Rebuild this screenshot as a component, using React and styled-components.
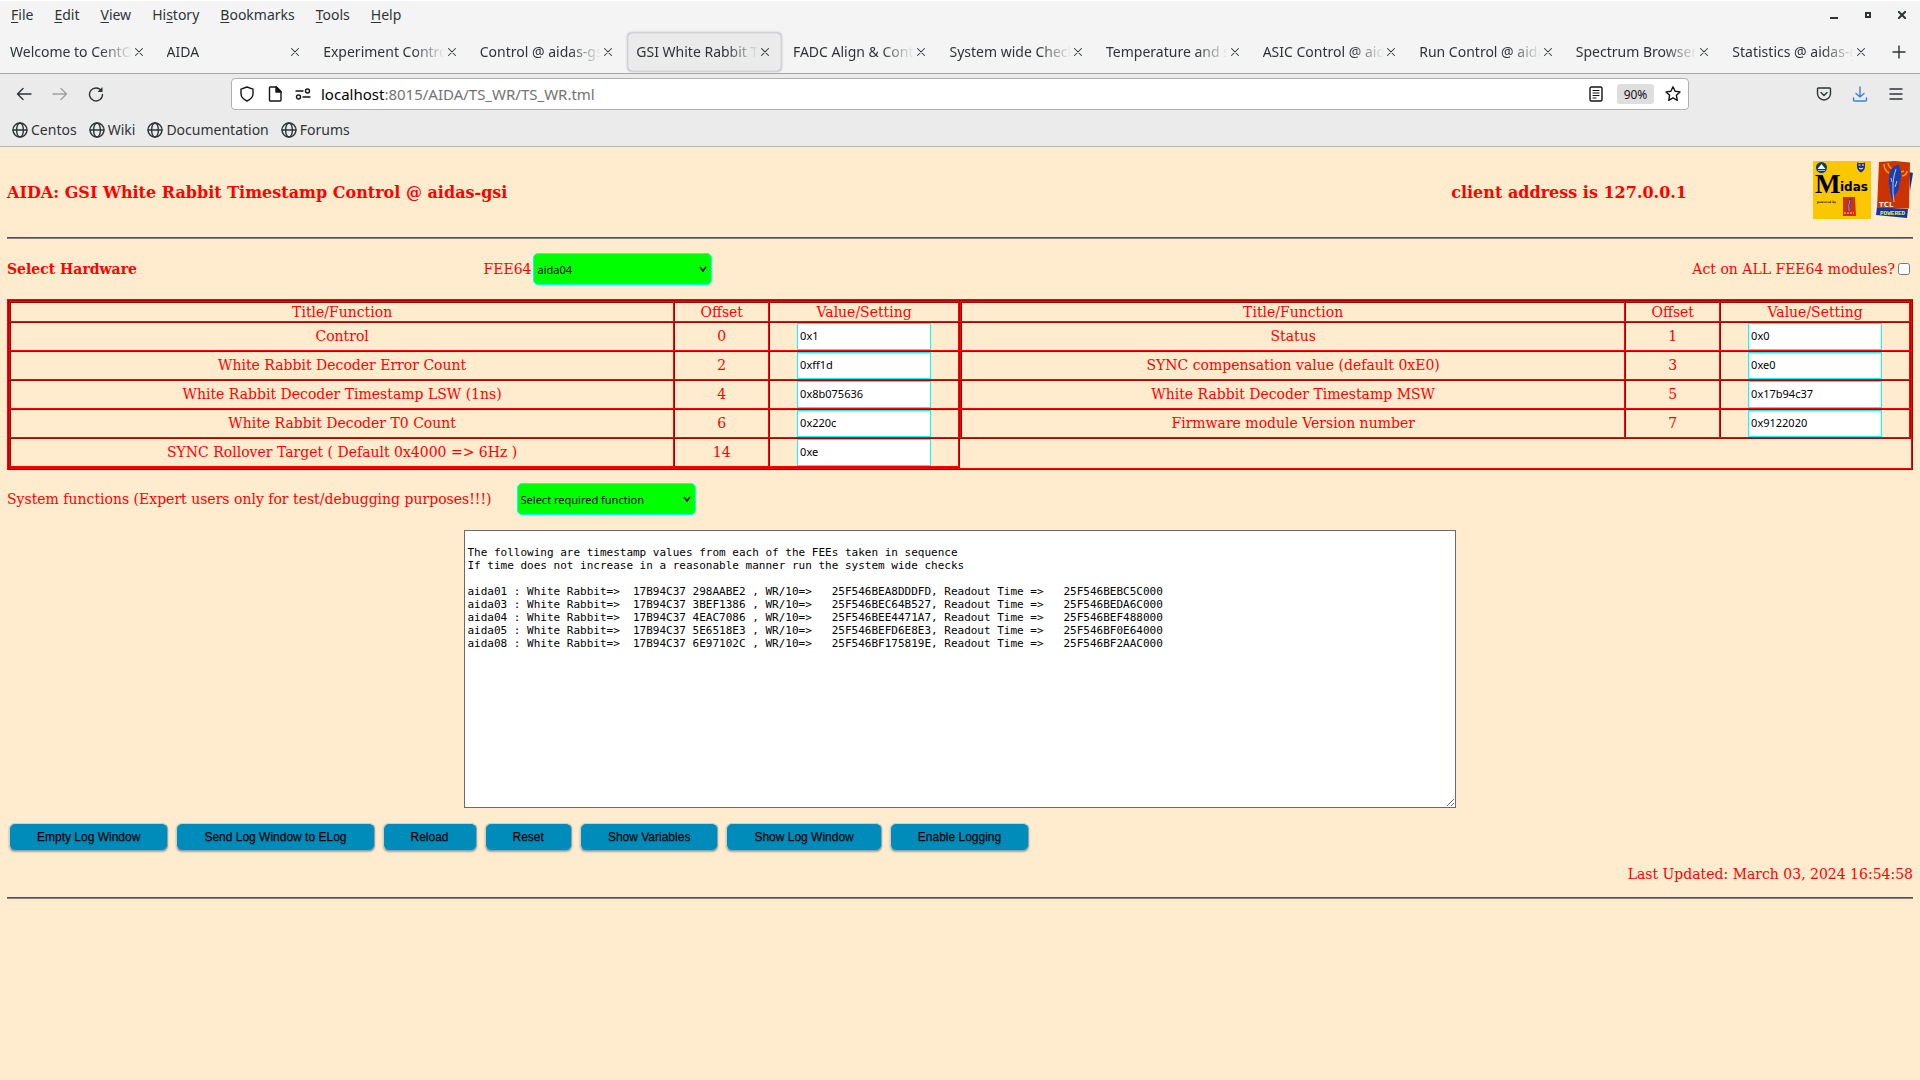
import React, { useState } from 'react';
import styled, { createGlobalStyle, css } from 'styled-components';

const GlobalStyle = createGlobalStyle`
  * {
    box-sizing: border-box;
  }
  body {
    margin: 0;
    background: #ffebcd;
    color: #ff0000;
    font-family: 'DejaVu Serif', serif;
    font-size: 14px;
    line-height: 18px;
  }
`;

/* ---------- browser chrome ---------- */

const Chrome = styled.header`
  background: #ebebeb;
  border-top: 1px solid #ffffff;
  border-bottom: 1px solid #b4b4b4;
  color: #2e3436;
  font-family: 'Noto Sans', sans-serif;
  font-size: 14px;
  line-height: 20px;
`;

const TopRow = styled.div`
  display: flex;
  align-items: center;
  justify-content: space-between;
  height: 30px;
  padding: 0 10px 2px 1px;
  background: #f4f4f4;
`;

const MenuList = styled.nav`
  display: flex;
`;

const PlainButton = styled.button`
  display: flex;
  align-items: center;
  justify-content: center;
  padding: 0;
  border: none;
  background: none;
  color: inherit;
  font: inherit;
`;

const MenuButton = styled(PlainButton)`
  display: block;
  padding: 0 11px 0 10px;

  u {
    text-underline-offset: 2px;
  }
`;

const WindowButtons = styled.div`
  display: flex;
  gap: 18px;
`;

const WindowButton = styled(PlainButton)`
  width: 16px;
  height: 16px;
`;

const TabStrip = styled.div`
  display: flex;
  align-items: center;
  height: 43px;
  border-bottom: 1px solid #a6a6a6;
  background: #f4f4f4;
`;

const Tab = styled.div`
  display: flex;
  flex: 1;
  align-items: center;
  min-width: 0;
  height: 38px;
  margin: 0 2px;
  padding: 0 9px 0 8px;
  border-radius: 4px;
  ${({ $active }) =>
    $active &&
    css`
      background: #ebebeb;
      box-shadow: 0 0 3px #8f8f9d, inset 0 0 1px #8f8f9d;
    `}
`;

const TabTitle = styled.button`
  flex: 1;
  min-width: 0;
  padding: 0;
  overflow: hidden;
  border: none;
  background: none;
  color: inherit;
  font: inherit;
  text-align: left;
  white-space: nowrap;
  mask-image: linear-gradient(to left, transparent, black 32px);
`;

const TabClose = styled(PlainButton)`
  width: 14px;
  height: 18px;
`;

const NewTab = styled(PlainButton)`
  width: 41px;
  height: 38px;
`;

const NavBar = styled.div`
  display: grid;
  grid-template-columns: 231px 1fr 231px;
  align-items: center;
  height: 40px;
`;

const NavGroup = styled.div`
  display: flex;
  justify-content: ${({ $end }) => ($end ? 'flex-end' : 'flex-start')};
  gap: 12px;
  padding: 0 12px;
`;

const NavButton = styled(PlainButton)`
  width: 24px;
  height: 24px;
  opacity: ${({ disabled }) => (disabled ? 0.4 : 1)};
  color: ${({ $color }) => $color || 'inherit'};
`;

const AddressBar = styled.div`
  display: flex;
  align-items: center;
  height: 32px;
  padding: 0 7px 0 5px;
  border: 1px solid #b0b0b0;
  border-radius: 4px;
  background: #ffffff;
  color: #15141a;
`;

const BarIcon = styled(PlainButton)`
  width: 20px;
  height: 20px;
  margin-right: 8px;
`;

const Address = styled.div`
  flex: 1;
  font-size: 15px;
  color: #737373;

  span {
    color: #000000;
  }
`;

const ZoomBadge = styled.button`
  width: 37px;
  height: 20px;
  margin: 0 11px 0 3px;
  padding: 0;
  border: none;
  border-radius: 3px;
  background: #dedede;
  color: #15141a;
  font-family: inherit;
  font-size: 12px;
`;

const Bookmarks = styled.nav`
  display: flex;
  gap: 12px;
  height: 32px;
  padding: 6px 12px;

  a {
    display: flex;
    align-items: center;
    gap: 3px;
    height: 20px;
    color: inherit;
    text-decoration: none;
  }
`;

/* ---------- page ---------- */

const Page = styled.main`
  padding: 0 7px;
`;

const PageHeader = styled.div`
  display: flex;
  align-items: center;
  height: 90px;
  padding-top: 2px;
`;

const Title = styled.h1`
  flex: 1;
  margin: 0;
  font-size: 16px;
  line-height: 20px;
`;

const ClientAddress = styled.h2`
  margin: 0 126px 0 0;
  font-size: 16px;
  line-height: 20px;
`;

const Logos = styled.div`
  display: flex;
  align-items: center;
  gap: 5px;
  height: 58px;
  margin-bottom: 6px;
`;

const Rule = styled.hr`
  height: 2px;
  margin: 0;
  border: none;
  border-top: 1px solid #505050;
  border-bottom: 1px solid #7f8088;
`;

const HardwareRow = styled.div`
  display: grid;
  grid-template-columns: 25% 1fr auto;
  align-items: center;
  height: 60px;
`;

const Inline = styled.div`
  display: flex;
  align-items: center;
  gap: 2px;
`;

const SelectWrap = styled.div`
  position: relative;

  svg {
    position: absolute;
    top: 13px;
    right: 5px;
    pointer-events: none;
  }
`;

const Select = styled.select`
  display: block;
  width: 179px;
  height: 32px;
  padding: 0 3px;
  appearance: none;
  border: 1px solid #00ffff;
  border-radius: 5px;
  background: #00ff00;
  color: #000000;
  font-family: 'Noto Sans', sans-serif;
  font-size: 11px;
`;

const AllModules = styled.label`
  display: flex;
  align-items: center;
  gap: 3px;
  padding-right: 3px;

  input {
    width: 12px;
    height: 12px;
    margin: 0;
  }
`;

const Registers = styled.div`
  display: grid;
  grid-template-columns: 1fr 1fr;
  align-items: start;
  border: 2px ridge #ff0000;
`;

const RegisterTable = styled.table`
  width: 100%;
  table-layout: fixed;
  border-collapse: collapse;
  border: 2px ridge #ff0000;
  text-align: center;

  th,
  td {
    padding: 0;
    border: 2px ridge #ff0000;
    font-weight: normal;
  }
  td:not(:last-child) {
    padding-bottom: 2px;
  }
  th:nth-child(1) {
    width: 70%;
  }
  th:nth-child(2) {
    width: 10%;
  }
`;

const ValueInput = styled.input`
  display: block;
  width: 134px;
  height: 27px;
  margin: 0 auto;
  padding: 0 2px 2px;
  border: 1px solid #00ffff;
  background: #ffffff;
  color: #000000;
  font-family: 'Noto Sans', sans-serif;
  font-size: 11px;
`;

const FunctionRow = styled.div`
  display: flex;
  align-items: center;
  gap: 25px;
  height: 60px;
  padding-bottom: 2px;
`;

const LogWindow = styled.textarea`
  display: block;
  width: 52%;
  height: 278px;
  margin: 0 auto;
  padding: 2px;
  border: 1px solid #696974;
  border-radius: 0;
  background: #ffffff;
  color: #000000;
  font-family: 'DejaVu Sans Mono', monospace;
  font-size: 11px;
  line-height: 13px;
`;

const Actions = styled.div`
  display: flex;
  gap: 8px;
  padding: 15px 2px 14px;
`;

const ActionButton = styled.button`
  height: 28px;
  padding: 0 27px;
  border: 1px solid;
  border-color: #c3d3d6 #8fa4ad #8fa4ad #c3d3d6;
  border-radius: 6px;
  background: #008cba;
  box-shadow: 0 1px 2px rgba(0, 0, 0, 0.3);
  color: #000000;
  font-family: 'Liberation Sans', Arial, sans-serif;
  font-size: 12px;
  text-shadow: 0 1px 1px rgba(0, 0, 0, 0.3);
`;

const Updated = styled.p`
  margin: 0 0 14px;
  text-align: right;
`;

const menus = [
  ['', 'F', 'ile'],
  ['', 'E', 'dit'],
  ['', 'V', 'iew'],
  ['Hi', 's', 'tory'],
  ['', 'B', 'ookmarks'],
  ['', 'T', 'ools'],
  ['', 'H', 'elp'],
];

const tabs = [
  'Welcome to CentO',
  'AIDA',
  'Experiment Control',
  'Control @ aidas-gsi',
  'GSI White Rabbit T',
  'FADC Align & Cont',
  'System wide Check',
  'Temperature and st',
  'ASIC Control @ aid',
  'Run Control @ aida',
  'Spectrum Browser',
  'Statistics @ aidas-g',
];

const leftRegisters = [
  ['Control', 0, '0x1'],
  ['White Rabbit Decoder Error Count', 2, '0xff1d'],
  ['White Rabbit Decoder Timestamp LSW (1ns)', 4, '0x8b075636'],
  ['White Rabbit Decoder T0 Count', 6, '0x220c'],
  ['SYNC Rollover Target ( Default 0x4000 => 6Hz )', 14, '0xe'],
];

const rightRegisters = [
  ['Status', 1, '0x0'],
  ['SYNC compensation value (default 0xE0)', 3, '0xe0'],
  ['White Rabbit Decoder Timestamp MSW', 5, '0x17b94c37'],
  ['Firmware module Version number', 7, '0x9122020'],
];

const actions = [
  'Empty Log Window',
  'Send Log Window to ELog',
  'Reload',
  'Reset',
  'Show Variables',
  'Show Log Window',
  'Enable Logging',
];

const logText = `
The following are timestamp values from each of the FEEs taken in sequence
If time does not increase in a reasonable manner run the system wide checks

aida01 : White Rabbit=>  17B94C37 298AABE2 , WR/10=>   25F546BEA8DDDFD, Readout Time =>   25F546BEBC5C000
aida03 : White Rabbit=>  17B94C37 3BEF1386 , WR/10=>   25F546BEC64B527, Readout Time =>   25F546BEDA6C000
aida04 : White Rabbit=>  17B94C37 4EAC7086 , WR/10=>   25F546BEE4471A7, Readout Time =>   25F546BEF488000
aida05 : White Rabbit=>  17B94C37 5E6518E3 , WR/10=>   25F546BEFD6E8E3, Readout Time =>   25F546BF0E64000
aida08 : White Rabbit=>  17B94C37 6E97102C , WR/10=>   25F546BF175819E, Readout Time =>   25F546BF2AAC000
`;

const Icon = ({ size = 16, width = 1.4, children }) => (
  <svg
    width={size}
    height={size}
    viewBox="0 0 16 16"
    fill="none"
    stroke="currentColor"
    strokeWidth={width}
    strokeLinecap="round"
    strokeLinejoin="round"
    aria-hidden="true"
  >
    {children}
  </svg>
);

const GlobeIcon = () => (
  <Icon>
    <circle cx="8" cy="8" r="7" />
    <ellipse cx="8" cy="8" rx="3.4" ry="7" />
    <path d="M1 8h14" />
  </Icon>
);

const MidasLogo = () => (
  <svg width="58" height="58" viewBox="0 0 58 58" role="img" aria-label="Midas">
    <rect width="58" height="58" fill="#fbc800" />
    <circle cx="8.5" cy="6.5" r="5.5" fill="#123a6b" />
    <path d="M4.500 8L8.500 3l4 5z" fill="#f4f7ff" />
    <path d="M5 9.500h7" stroke="#9fb6d8" />
    <path d="M44 1.500q4 1 8 0v4.500q-.5 3.500-4 5.500-3.500-2-4-5.500z" fill="#1c2f8a" />
    <path d="M45.500 4h2M49 4h2M46 7q2 2 4 0" stroke="#fff" fill="none" />
    <text x="2" y="32" fontFamily="Liberation Serif, serif" fontWeight="700" fontSize="27">
      M
    </text>
    <text x="27" y="30" fontFamily="DejaVu Sans, sans-serif" fontWeight="700" fontSize="12">
      idas
    </text>
    <text x="4" y="42" fontFamily="DejaVu Serif, serif" fontWeight="700" fontSize="3">
      powered by
    </text>
    <path d="M30 36h12l1 19H30z" fill="#d42e0a" />
    <path d="M38 37q-4 4-3 9 0 3-1 6 4-4 3-8 2-4 1-7z" fill="#25389a" />
    <path d="M37 39q-2 5-1 11" stroke="#e8ecff" strokeWidth=".6" fill="none" />
    <path d="M31 52h10" stroke="#f8c9b0" strokeDasharray="2 1" />
  </svg>
);

const TclLogo = () => (
  <svg width="37" height="58" viewBox="0 0 37 58" role="img" aria-label="Tcl powered">
    <path d="M33 11l4 1-3 18z" fill="#12379b" />
    <path d="M1 46L0 54l31 3 1-9z" fill="#12379b" />
    <path d="M3 1l16-1 15 1.500-1 46L1 47z" fill="#cc3300" />
    <path
      d="M8 3q0 6 5 9M12 2q0 3 4 6M26 15q5-1 5-5M25 11l3-1"
      stroke="#ff9d00"
      strokeWidth="1.5"
      fill="none"
    />
    <path d="M22 4q-8 1-9 12-1 6 1 12-1 3 1 6l2 7 2-7q5-5 4-11 4-8 1-15l-1-4z" fill="#1a3fb0" />
    <path d="M20 8q-5 13-2 33M21 20l-2 6M15 17l1 4" stroke="#c9d5ff" strokeWidth=".9" fill="none" />
    <text x="3" y="46" fontFamily="DejaVu Sans, sans-serif" fontSize="7" fontWeight="700" fill="#ffe9dc">
      TCL
    </text>
    <text x="4" y="54" fontFamily="Liberation Mono, monospace" fontSize="6" fontWeight="700" fill="#e8ef5a">
      POWERED
    </text>
  </svg>
);

function BrowserChrome() {
  const [activeTab, setActiveTab] = useState(4);

  return (
    <Chrome>
      <TopRow>
        <MenuList aria-label="Menu bar">
          {menus.map(([before, key, after]) => (
            <MenuButton key={after}>
              {before}
              <u>{key}</u>
              {after}
            </MenuButton>
          ))}
        </MenuList>
        <WindowButtons>
          <WindowButton aria-label="Minimize">
            <svg width="8" height="8">
              <path d="M0 7h8" stroke="currentColor" strokeWidth="2" />
            </svg>
          </WindowButton>
          <WindowButton aria-label="Maximize">
            <svg width="6" height="6">
              <rect x="1" y="1" width="4" height="4" fill="none" stroke="currentColor" strokeWidth="2" />
            </svg>
          </WindowButton>
          <WindowButton aria-label="Close">
            <svg width="8" height="8">
              <path d="M0 0l8 8M8 0L0 8" stroke="currentColor" strokeWidth="2" />
            </svg>
          </WindowButton>
        </WindowButtons>
      </TopRow>

      <TabStrip>
        {tabs.map((tab, i) => (
          <Tab key={tab} $active={i === activeTab}>
            <TabTitle onClick={() => setActiveTab(i)}>{tab}</TabTitle>
            <TabClose aria-label="Close tab">
              <Icon size={14} width={1.2}>
                <path d="M4 4l8 8M12 4l-8 8" />
              </Icon>
            </TabClose>
          </Tab>
        ))}
        <NewTab aria-label="New tab">
          <Icon>
            <path d="M8 2v12M2 8h12" />
          </Icon>
        </NewTab>
      </TabStrip>

      <NavBar>
        <NavGroup>
          <NavButton aria-label="Back">
            <Icon>
              <path d="M15 8H1.500M7 2.500L1.500 8 7 13.500" />
            </Icon>
          </NavButton>
          <NavButton aria-label="Forward" disabled>
            <Icon>
              <path d="M1 8h13.500M9 2.500L14.500 8 9 13.500" />
            </Icon>
          </NavButton>
          <NavButton aria-label="Reload">
            <Icon>
              <path d="M13.500 5A6.500 6.500 0 1 0 14.500 8.500" />
              <path d="M14.500 1v5h-5z" fill="currentColor" stroke="none" />
            </Icon>
          </NavButton>
        </NavGroup>
        <AddressBar>
          <BarIcon aria-label="Tracking protection">
            <Icon>
              <path d="M8 1l6 2.200v4.300c0 3.500-2.500 6-6 7.500-3.500-1.500-6-4-6-7.500V3.200z" />
            </Icon>
          </BarIcon>
          <BarIcon aria-label="Site information">
            <Icon>
              <path d="M3 1h6.500L14 5.500V14a1 1 0 0 1-1 1H3.500a1 1 0 0 1-1-1V1.500z" />
              <path d="M9 1l5 5H9z" fill="currentColor" />
            </Icon>
          </BarIcon>
          <BarIcon aria-label="Permissions">
            <Icon>
              <path d="M1 5h7M8 11h7" />
              <circle cx="12.500" cy="5" r="2" />
              <circle cx="3.500" cy="11" r="2" />
            </Icon>
          </BarIcon>
          <Address>
            <span>localhost</span>:8015/AIDA/TS_WR/TS_WR.tml
          </Address>
          <BarIcon aria-label="Reader view">
            <Icon>
              <rect x="2" y="1" width="12" height="14" rx="1.500" />
              <path d="M5 4.500h6M5 7h6M5 9.500h6M5 12h3" strokeWidth="1.200" />
            </Icon>
          </BarIcon>
          <ZoomBadge>90%</ZoomBadge>
          <PlainButton aria-label="Bookmark this page">
            <Icon>
              <path d="M8 .8l2.100 4.500 4.900.6-3.600 3.400.9 5L8 11.800l-4.300 2.500.9-5L1 5.900l4.900-.6z" />
            </Icon>
          </PlainButton>
        </AddressBar>
        <NavGroup $end>
          <NavButton aria-label="Save to Pocket">
            <Icon>
              <path d="M2.500 2h11a1 1 0 0 1 1 1v4.500a6.500 6.500 0 0 1-13 0V3a1 1 0 0 1 1-1z" />
              <path d="M5 6.500l3 3 3-3" />
            </Icon>
          </NavButton>
          <NavButton aria-label="Downloads" $color="#3584e4">
            <Icon>
              <path d="M8 1v10M4 7.500L8 11l4-3.500M1.500 12v2a1 1 0 0 0 1 1h11a1 1 0 0 0 1-1v-2" />
            </Icon>
          </NavButton>
          <NavButton aria-label="Application menu">
            <Icon>
              <path d="M2 3h12M2 8h12M2 13h12" />
            </Icon>
          </NavButton>
        </NavGroup>
      </NavBar>

      <Bookmarks aria-label="Bookmarks">
        {['Centos', 'Wiki', 'Documentation', 'Forums'].map((name) => (
          <a href="#" key={name}>
            <GlobeIcon />
            {name}
          </a>
        ))}
      </Bookmarks>
    </Chrome>
  );
}

const Dropdown = ({ id, options, ...rest }) => (
  <SelectWrap>
    <Select id={id} {...rest}>
      {options.map((option) => (
        <option key={option}>{option}</option>
      ))}
    </Select>
    <svg width="8" height="6" aria-hidden="true">
      <path d="M1 1l3 4 3-4" fill="none" stroke="#000" strokeWidth="1.500" />
    </svg>
  </SelectWrap>
);

const RegisterGroup = ({ rows }) => (
  <RegisterTable>
    <thead>
      <tr>
        <th>Title/Function</th>
        <th>Offset</th>
        <th>Value/Setting</th>
      </tr>
    </thead>
    <tbody>
      {rows.map(([name, offset, value]) => (
        <tr key={name}>
          <td>{name}</td>
          <td>{offset}</td>
          <td>
            <ValueInput type="text" aria-label={name} defaultValue={value} />
          </td>
        </tr>
      ))}
    </tbody>
  </RegisterTable>
);

export default function App() {
  const [log, setLog] = useState(logText);

  return (
    <>
      <GlobalStyle />
      <BrowserChrome />
      <Page>
        <PageHeader>
          <Title>AIDA: GSI White Rabbit Timestamp Control @ aidas-gsi</Title>
          <ClientAddress>client address is 127.0.0.1</ClientAddress>
          <Logos>
            <MidasLogo />
            <TclLogo />
          </Logos>
        </PageHeader>
        <Rule />

        <HardwareRow>
          <strong>Select Hardware</strong>
          <Inline>
            <label htmlFor="fee64">FEE64</label>
            <Dropdown
              id="fee64"
              defaultValue="aida04"
              options={['aida01', 'aida03', 'aida04', 'aida05', 'aida08']}
            />
          </Inline>
          <AllModules>
            Act on ALL FEE64 modules?
            <input type="checkbox" />
          </AllModules>
        </HardwareRow>

        <Registers>
          <RegisterGroup rows={leftRegisters} />
          <RegisterGroup rows={rightRegisters} />
        </Registers>

        <FunctionRow>
          <label htmlFor="functions">
            System functions (Expert users only for test/debugging purposes!!!)
          </label>
          <Dropdown id="functions" options={['Select required function']} />
        </FunctionRow>

        <LogWindow
          aria-label="Log window"
          spellCheck={false}
          value={log}
          onChange={(e) => setLog(e.target.value)}
        />

        <Actions>
          {actions.map((name) => (
            <ActionButton
              key={name}
              type="button"
              onClick={name === 'Empty Log Window' ? () => setLog('') : undefined}
            >
              {name}
            </ActionButton>
          ))}
        </Actions>

        <Updated>Last Updated: March 03, 2024 16:54:58</Updated>
        <Rule />
      </Page>
    </>
  );
}
